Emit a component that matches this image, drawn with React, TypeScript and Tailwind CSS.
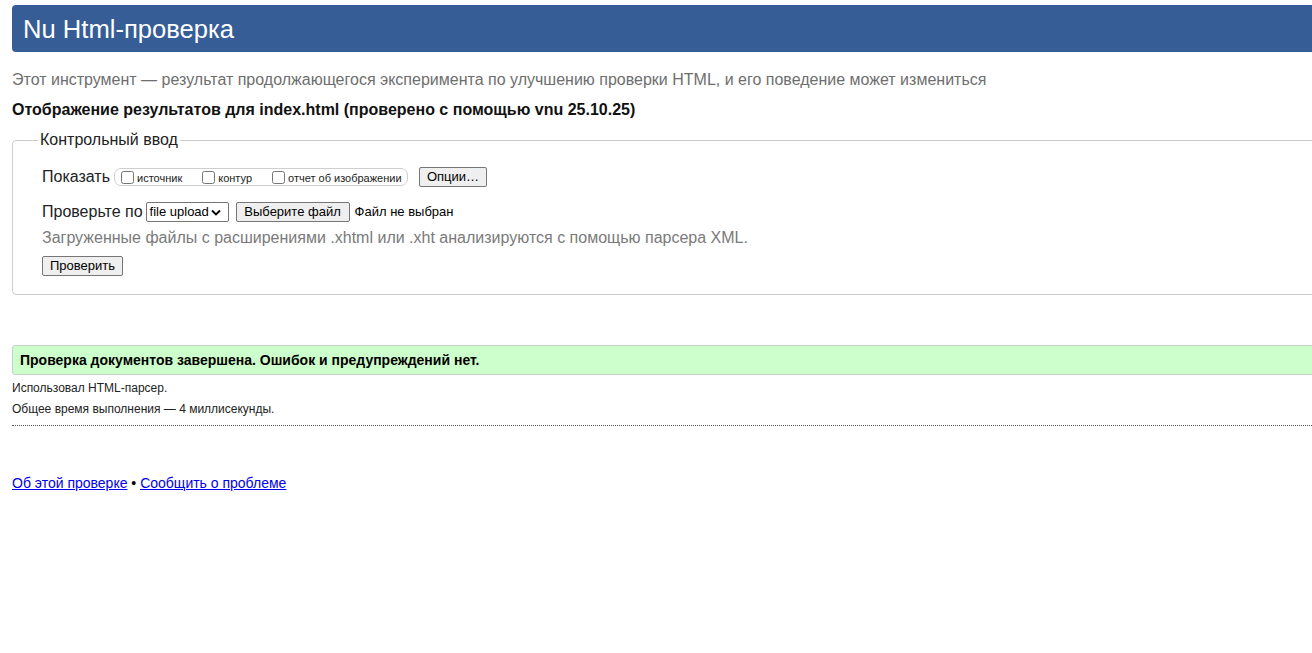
import React from "react";

const font = { fontFamily: '"Liberation Sans", Arial, sans-serif' };

function Btn({ children, className = "" }: { children: React.ReactNode; className?: string }) {
  return (
    <button
      type="button"
      className={
        "h-[20px] border border-[#767676] rounded-[2px] bg-[#efefef] text-[13px] leading-[18px] text-black " +
        className
      }
    >
      {children}
    </button>
  );
}

function Check({ label }: { label: string }) {
  return (
    <label className="flex items-center">
      <input type="checkbox" className="w-[13px] h-[13px] m-0" />
      <span className="ml-[3px] text-[11px] leading-[13px] text-[#222] translate-y-[1px]">{label}</span>
    </label>
  );
}

export default function App() {
  return (
    <div className="w-full overflow-hidden bg-white min-h-[653px]" style={font}>
      <div className="w-[1400px] pl-[12px] text-[#222]">
        <div className="mt-[5px] h-[47px] bg-[#365d96] rounded-l-[4px] flex items-center pl-[11px]">
          <h1 className="text-[25.6px] leading-[30px] text-white font-normal">Nu Html-проверка</h1>
        </div>

        <p className="mt-[19px] text-[16px] leading-[18px] text-[#6e6e6e]">
          Этот инструмент — результат продолжающегося эксперимента по улучшению проверки HTML, и его поведение может измениться
        </p>

        <p className="mt-[12px] text-[16px] leading-[18px] font-bold text-[#111]">
          Отображение результатов для index.html (проверено с помощью vnu 25.10.25)
        </p>

        <fieldset className="mt-[12px] border border-[#cccccc] rounded-[4px] pl-[25px] pb-[18px]">
          <legend className="px-[2px] text-[16px] leading-[18px] text-[#222]">Контрольный ввод</legend>
          <div className="pl-[4px] pt-[18px] flex flex-col">
            <div className="flex items-center h-[20px]">
              <span className="text-[16px] leading-[18px]">Показать</span>
              <div className="ml-[4px] h-[18px] w-[294px] border border-[#cfcfcf] rounded-[7px] flex items-center pl-[6px]">
                <Check label="источник" />
                <div className="w-[20px]" />
                <Check label="контур" />
                <div className="w-[20px]" />
                <Check label="отчет об изображении" />
              </div>
              <Btn className="ml-[11px] w-[68px]">Опции…</Btn>
            </div>

            <div className="flex items-center h-[20px] mt-[15px]">
              <span className="text-[16px] leading-[18px]">Проверьте по</span>
              <span className="ml-[3px] h-[20px] w-[83px] border border-[#767676] rounded-[2px] bg-white flex items-center pl-[3px] text-[13px] text-black">
                <span>file upload</span>
                <svg width="10" height="7" viewBox="0 0 10 7" className="ml-[2px]">
                  <path d="M1 1.5 L5 5.5 L9 1.5" fill="none" stroke="#000" strokeWidth="1.8" />
                </svg>
              </span>
              <Btn className="ml-[7px] w-[114px]">Выберите файл</Btn>
              <span className="ml-[5px] text-[13px] leading-[16px] text-black">Файл не выбран</span>
            </div>

            <p className="mt-[7px] text-[16px] leading-[18px] text-[#7a7a7a]">
              Загруженные файлы с расширениями .xhtml или .xht анализируются с помощью парсера XML.
            </p>

            <div className="mt-[9px] flex">
              <Btn className="w-[81px]">Проверить</Btn>
            </div>
          </div>
        </fieldset>

        <div className="mt-[50px] h-[30px] border border-[#cccccc] rounded-[3px] bg-[#ccffcc] flex items-center pl-[7px]">
          <p className="text-[14px] leading-[16px] font-bold text-black">
            Проверка документов завершена. Ошибок и предупреждений нет.
          </p>
        </div>

        <p className="mt-[6px] text-[12px] leading-[14px] text-[#222]">Использовал HTML-парсер.</p>
        <p className="mt-[7px] text-[12px] leading-[14px] text-[#222]">Общее время выполнения — 4 миллисекунды.</p>
        <div className="mt-[9px] border-b border-dotted border-[#555]" />

        <p className="mt-[49px] text-[14px] leading-[16px] text-black">
          <a href="#" className="text-[#0000ee] underline">Об этой проверке</a>
          {" • "}
          <a href="#" className="text-[#0000ee] underline">Сообщить о проблеме</a>
        </p>
      </div>
    </div>
  );
}
